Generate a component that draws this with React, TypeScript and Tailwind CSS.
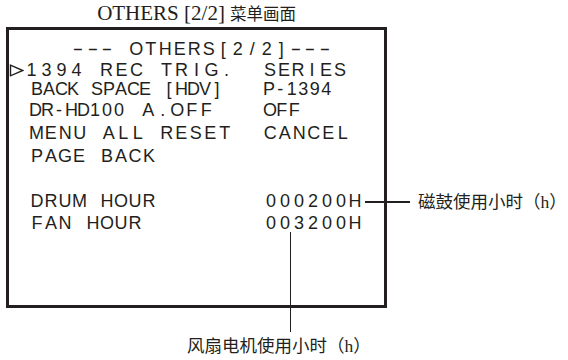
import React from "react";

// ── OSD menu text: fixed character cells, like the camera's on-screen font ──

function Cells({ text, cell, dash }: { text: string; cell: string; dash?: string }) {
  return (
    <span className="flex">
      {Array.from(text).map((ch, i) => (
        <span key={i} className={`${cell} shrink-0 text-center`}>
          {ch === " " ? (
            "\u00a0"
          ) : ch === "-" && dash ? (
            <span className={`inline-block ${dash}`}>-</span>
          ) : (
            ch
          )}
        </span>
      ))}
    </span>
  );
}

function Row({
  className,
  left,
  value,
}: {
  className: string;
  left: React.ReactNode;
  value?: React.ReactNode;
}) {
  return (
    <div className={`flex h-[18px] items-center ${className}`}>
      <div className="flex w-[254px] shrink-0 items-center">{left}</div>
      {value}
    </div>
  );
}

function Pointer() {
  return (
    <svg width="15" height="13" viewBox="0 0 15 13" fill="none" stroke="#231f20" strokeWidth="1.4" className="shrink-0">
      <path d="M1.5 1.2 L13.8 6.5 L1.5 11.8 Z" strokeLinejoin="miter" />
    </svg>
  );
}

export default function App() {
  return (
    <div className="relative h-[360px] w-[568px] overflow-hidden bg-white text-[#231f20]">
      {/* Caption */}
      <div className="ml-[6px] flex h-[27px] w-[381px] items-center justify-center whitespace-nowrap">
        <span className="font-['Liberation_Serif','Times_New_Roman',serif] text-[21px] leading-none">OTHERS [2/2]</span>
        <span className="ml-[5px] font-['Noto_Sans_CJK_SC',sans-serif] text-[16.5px] leading-none">菜单画面</span>
      </div>

      <div className="flex items-start">
        {/* OSD frame */}
        <div className="ml-[6px] flex h-[281px] w-[381px] shrink-0 flex-col border-[3px] border-[#231f20] pt-[10px] font-['Liberation_Sans',Arial,sans-serif] text-[18px] leading-[18px]">
          <div className="flex h-[18px] items-center pl-[62px]">
            <Cells text="--- OTHERS[2/2]---" cell="w-[14.5px]" dash="scale-x-[1.8]" />
          </div>

          <Row
            className="mt-[3px]"
            left={
              <>
                <Pointer />
                <Cells text="1394 REC TRIG." cell="w-[15px]" />
              </>
            }
            value={<Cells text="SERIES" cell="w-[14px]" />}
          />
          <Row
            className="mt-[1px]"
            left={
              <span className="pl-[22px]">
                <Cells text="BACK SPACE [HDV]" cell="w-[12px]" />
              </span>
            }
            value={<Cells text="P-1394" cell="w-[11.5px]" />}
          />
          <Row
            className="mt-[3px]"
            left={
              <span className="flex pl-[20px]">
                <Cells text="DR-HD100" cell="w-[12px]" />
                <span className="ml-[16px]">
                  <Cells text="A.OFF" cell="w-[14.5px]" />
                </span>
              </span>
            }
            value={<Cells text="OFF" cell="w-[12.5px]" />}
          />
          <Row
            className="mt-[5px]"
            left={
              <span className="pl-[20px]">
                <Cells text="MENU ALL RESET" cell="w-[14.5px]" />
              </span>
            }
            value={<Cells text="CANCEL" cell="w-[14.5px]" />}
          />
          <Row
            className="mt-[5px]"
            left={
              <span className="pl-[21px]">
                <Cells text="PAGE BACK" cell="w-[14px]" />
              </span>
            }
          />
          <Row
            className="mt-[27px]"
            left={
              <span className="pl-[21px]">
                <Cells text="DRUM HOUR" cell="w-[14px]" />
              </span>
            }
            value={
              <span className="ml-[1px]">
                <Cells text="000200H" cell="w-[14px]" />
              </span>
            }
          />
          <Row
            className="mt-[4px]"
            left={
              <span className="pl-[21px]">
                <Cells text="FAN HOUR" cell="w-[14px]" />
              </span>
            }
            value={
              <span className="ml-[1px]">
                <Cells text="003200H" cell="w-[14px]" />
              </span>
            }
          />
        </div>

        {/* Callout: drum hours */}
        <div className="ml-[31px] mt-[163px] whitespace-nowrap font-['Liberation_Serif','Noto_Sans_CJK_SC',serif] text-[17.5px] leading-[24px]">
          磁鼓使用小时（h）
        </div>
      </div>

      {/* Callout: fan hours */}
      <div className="mt-[26px] whitespace-nowrap pl-[187px] font-['Liberation_Serif','Noto_Sans_CJK_SC',serif] text-[17.5px] leading-[24px]">
        风扇电机使用小时（h）
      </div>

      {/* Leader lines */}
      <div className="absolute left-[365px] top-[201px] h-[1.5px] w-[45px] bg-[#231f20]" />
      <div className="absolute left-[289.5px] top-[232px] h-[100px] w-[1.5px] bg-[#231f20]" />
    </div>
  );
}
